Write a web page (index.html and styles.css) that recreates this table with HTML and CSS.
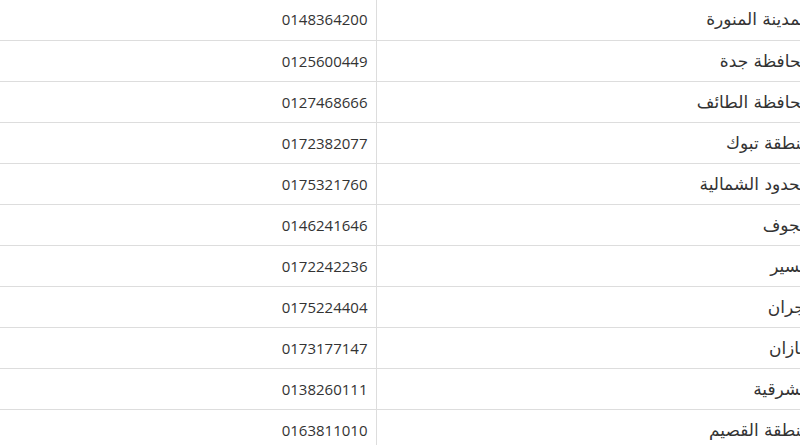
FILE: index.html
```html
<!DOCTYPE html>
<html lang="ar" dir="rtl">
<head>
<meta charset="utf-8">
<link rel="stylesheet" href="styles.css">
</head>
<body>
<table class="regions">
<tbody>
<tr><td class="name">المدينة المنورة</td><td class="phone">0148364200</td></tr>
<tr><td class="name">محافظة جدة</td><td class="phone">0125600449</td></tr>
<tr><td class="name">محافظة الطائف</td><td class="phone">0127468666</td></tr>
<tr><td class="name">منطقة تبوك</td><td class="phone">0172382077</td></tr>
<tr><td class="name">الحدود الشمالية</td><td class="phone">0175321760</td></tr>
<tr><td class="name">الجوف</td><td class="phone">0146241646</td></tr>
<tr><td class="name">عسير</td><td class="phone">0172242236</td></tr>
<tr><td class="name">نجران</td><td class="phone">0175224404</td></tr>
<tr><td class="name">جازان</td><td class="phone">0173177147</td></tr>
<tr><td class="name">الشرقية</td><td class="phone">0138260111</td></tr>
<tr><td class="name">منطقة القصيم</td><td class="phone">0163811010</td></tr>
</tbody>
</table>
</body>
</html>
```

FILE: styles.css
```css
html, body {
  margin: 0;
  padding: 0;
  background: #fff;
  overflow: hidden;
}
body {
  font-family: "Open Sans", "DejaVu Sans", sans-serif;
  font-size: 15px;
  color: #333;
}
.regions {
  border-collapse: collapse;
  width: 818px;
  margin-top: -1px;
  margin-right: -18px;
  table-layout: fixed;
}
.regions td {
  height: 41px;
  padding: 0 8px;
  border-bottom: 1px solid #ddd;
  text-align: right;
  vertical-align: middle;
  box-sizing: border-box;
  white-space: nowrap;
}
.regions .name {
  width: 442px;
  border-left: 1px solid #ddd;
  font-family: "DejaVu Sans", sans-serif;
  font-size: 17px;
}
.regions .phone {
  width: 376px;
}
```
